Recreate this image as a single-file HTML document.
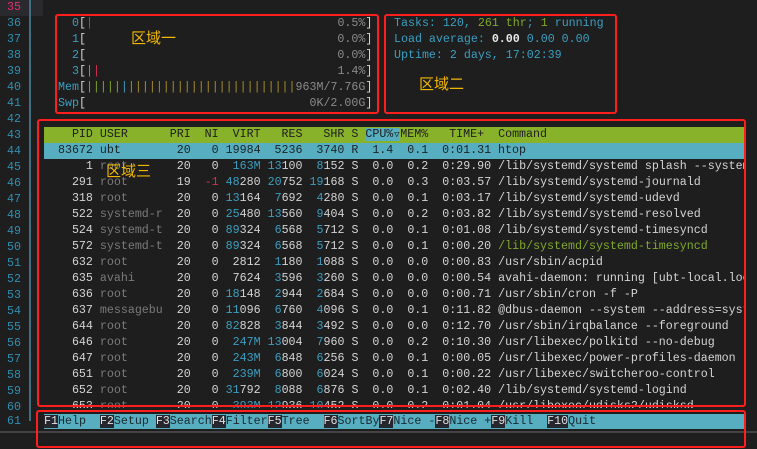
<!DOCTYPE html>
<html><head><meta charset="utf-8">
<style>
html,body{margin:0;padding:0;background:#1e1e1e;width:757px;height:449px;overflow:hidden;position:relative}
.l{position:absolute;left:44px;height:16px;line-height:16px;font-family:"Liberation Mono","DejaVu Sans Mono",monospace;font-size:11.65px;white-space:pre;color:#d4d4d4;overflow:hidden}
.n{position:absolute;left:0;width:21px;text-align:right;height:16px;line-height:16px;font-family:"Liberation Mono",monospace;font-size:11.65px;color:#2f8fb0}
.g{color:#7a7a7a}.t{color:#3a9ec0}.r{color:#d03050}.gr{color:#7fa82a}.d{color:#8a8a8a}.w{color:#e8e8e8}
.box{position:absolute;border:2.5px solid #ff1e1e;border-radius:3px;box-sizing:border-box}
.cn{position:absolute;font-family:"Noto Sans CJK SC","WenQuanYi Zen Hei",sans-serif;font-size:15px;line-height:16px;color:#f2b800}
.k{background:#26262e;color:#e0e0e0}.f{background:#56aec0;color:#1a2a30}
.tri{display:inline-block;width:7px;overflow:hidden;vertical-align:top;font-size:9px;text-align:center}
</style></head><body>
<div style="position:absolute;left:0;top:0;width:43px;height:16px;background:#2a2a2e"></div>
<div style="position:absolute;left:29px;top:0;width:1.5px;height:421px;background:#3f6f80"></div>
<div style="position:absolute;left:0;top:431px;width:757px;height:1.5px;background:#444"></div>

<div class="n" style="top:0;color:#e0306a">35</div>
<div class="n" style="top:16px">36</div><div class="n" style="top:32px">37</div><div class="n" style="top:48px">38</div><div class="n" style="top:64px">39</div><div class="n" style="top:80px">40</div><div class="n" style="top:96px">41</div><div class="n" style="top:112px">42</div><div class="n" style="top:128px">43</div><div class="n" style="top:144px">44</div><div class="n" style="top:160px">45</div><div class="n" style="top:176px">46</div><div class="n" style="top:192px">47</div><div class="n" style="top:208px">48</div><div class="n" style="top:224px">49</div><div class="n" style="top:240px">50</div><div class="n" style="top:256px">51</div><div class="n" style="top:272px">52</div><div class="n" style="top:288px">53</div><div class="n" style="top:304px">54</div><div class="n" style="top:320px">55</div><div class="n" style="top:336px">56</div><div class="n" style="top:352px">57</div><div class="n" style="top:368px">58</div><div class="n" style="top:384px">59</div><div class="n" style="top:400px">60</div><div class="n" style="top:414px">61</div>

<div class="l" style="top:16px"><span class="t">    0</span>[<span class="r">|</span>                                   <span class="d">0.5%</span>]</div>
<div class="l" style="top:32px"><span class="t">    1</span>[                                    <span class="d">0.0%</span>]</div>
<div class="l" style="top:48px"><span class="t">    2</span>[                                    <span class="d">0.0%</span>]</div>
<div class="l" style="top:64px"><span class="t">    3</span>[<span class="gr">|</span><span class="r">|</span>                                  <span class="d">1.4%</span>]</div>
<div class="l" style="top:80px"><span class="t">  Mem</span>[<span class="gr">|||||</span><span class="t">|</span><span style="color:#a8902a">||||||||||||||||||||||||</span><span class="d">963M/7.76G</span>]</div>
<div class="l" style="top:96px"><span class="t">  Swp</span>[                                <span class="d">0K/2.00G</span>]</div>

<div class="l" style="top:16px;left:394px"><span class="t">Tasks: 120, </span><span class="gr">261 thr</span><span class="t">; </span><span class="gr">1</span><span class="t"> running</span></div>
<div class="l" style="top:32px;left:394px"><span class="t">Load average: </span><b class="w">0.00</b><span class="t"> 0.00 0.00</span></div>
<div class="l" style="top:48px;left:394px"><span class="t">Uptime: 2 days, 17:02:39</span></div>

<div class="l" style="top:127px;width:701px;background:#88b22a;color:#1e1e1e">    PID USER      PRI  NI  VIRT   RES   SHR S <span style="background:#56aec0">CPU%<span class="tri">▽</span></span>MEM%   TIME+  Command</div>
<div class="l" style="top:143px;width:701px;background:#56aec0;color:#1a2328">  83672 ubt        20   0 19984  5236  3740 R  1.4  0.1  0:01.31 htop</div>
<div class="l" style="top:159px;width:701px">      1 <span class="g">root     </span>  20   0  <span class="t">163M</span> <span class="t">13</span>100  <span class="t">8</span>152 S  0.0  0.2  0:29.90 /lib/systemd/systemd splash --system</div>
<div class="l" style="top:175px;width:701px">    291 <span class="g">root     </span>  19  <span class="r">-1</span> <span class="t">48</span>280 <span class="t">20</span>752 <span class="t">19</span>168 S  0.0  0.3  0:03.57 /lib/systemd/systemd-journald</div>
<div class="l" style="top:191px;width:701px">    318 <span class="g">root     </span>  20   0 <span class="t">13</span>164  <span class="t">7</span>692  <span class="t">4</span>280 S  0.0  0.1  0:03.17 /lib/systemd/systemd-udevd</div>
<div class="l" style="top:207px;width:701px">    522 <span class="g">systemd-r</span>  20   0 <span class="t">25</span>480 <span class="t">13</span>560  <span class="t">9</span>404 S  0.0  0.2  0:03.82 /lib/systemd/systemd-resolved</div>
<div class="l" style="top:223px;width:701px">    524 <span class="g">systemd-t</span>  20   0 <span class="t">89</span>324  <span class="t">6</span>568  <span class="t">5</span>712 S  0.0  0.1  0:01.08 /lib/systemd/systemd-timesyncd</div>
<div class="l" style="top:239px;width:701px">    572 <span class="g">systemd-t</span>  20   0 <span class="t">89</span>324  <span class="t">6</span>568  <span class="t">5</span>712 S  0.0  0.1  0:00.20 <span class="gr">/lib/systemd/systemd-timesyncd</span></div>
<div class="l" style="top:255px;width:701px">    632 <span class="g">root     </span>  20   0  2812  <span class="t">1</span>180  <span class="t">1</span>088 S  0.0  0.0  0:00.83 /usr/sbin/acpid</div>
<div class="l" style="top:271px;width:701px">    635 <span class="g">avahi    </span>  20   0  7624  <span class="t">3</span>596  <span class="t">3</span>260 S  0.0  0.0  0:00.54 avahi-daemon: running [ubt-local.loc</div>
<div class="l" style="top:287px;width:701px">    636 <span class="g">root     </span>  20   0 <span class="t">18</span>148  <span class="t">2</span>944  <span class="t">2</span>684 S  0.0  0.0  0:00.71 /usr/sbin/cron -f -P</div>
<div class="l" style="top:303px;width:701px">    637 <span class="g">messagebu</span>  20   0 <span class="t">11</span>096  <span class="t">6</span>760  <span class="t">4</span>096 S  0.0  0.1  0:11.82 @dbus-daemon --system --address=syst</div>
<div class="l" style="top:319px;width:701px">    644 <span class="g">root     </span>  20   0 <span class="t">82</span>828  <span class="t">3</span>844  <span class="t">3</span>492 S  0.0  0.0  0:12.70 /usr/sbin/irqbalance --foreground</div>
<div class="l" style="top:335px;width:701px">    646 <span class="g">root     </span>  20   0  <span class="t">247M</span> <span class="t">13</span>004  <span class="t">7</span>960 S  0.0  0.2  0:10.30 /usr/libexec/polkitd --no-debug</div>
<div class="l" style="top:351px;width:701px">    647 <span class="g">root     </span>  20   0  <span class="t">243M</span>  <span class="t">6</span>848  <span class="t">6</span>256 S  0.0  0.1  0:00.05 /usr/libexec/power-profiles-daemon</div>
<div class="l" style="top:367px;width:701px">    651 <span class="g">root     </span>  20   0  <span class="t">239M</span>  <span class="t">6</span>800  <span class="t">6</span>024 S  0.0  0.1  0:00.22 /usr/libexec/switcheroo-control</div>
<div class="l" style="top:383px;width:701px">    652 <span class="g">root     </span>  20   0 <span class="t">31</span>792  <span class="t">8</span>088  <span class="t">6</span>876 S  0.0  0.1  0:02.40 /lib/systemd/systemd-logind</div>
<div class="l" style="top:399px;width:701px;height:9px">    653 <span class="g">root     </span>  20   0  <span class="t">393M</span> <span class="t">12</span>936 <span class="t">10</span>452 S  0.0  0.2  0:01.04 /usr/libexec/udisks2/udisksd</div>

<div class="l" style="top:414px;width:701px;height:15px;line-height:15px;background:#56aec0"><span class="k">F1</span><span class="f">Help  </span><span class="k">F2</span><span class="f">Setup </span><span class="k">F3</span><span class="f">Search</span><span class="k">F4</span><span class="f">Filter</span><span class="k">F5</span><span class="f">Tree  </span><span class="k">F6</span><span class="f">SortBy</span><span class="k">F7</span><span class="f">Nice -</span><span class="k">F8</span><span class="f">Nice +</span><span class="k">F9</span><span class="f">Kill  </span><span class="k">F10</span><span class="f">Quit</span></div>

<div class="box" style="left:55px;top:14px;width:324px;height:100px"></div>
<div class="box" style="left:384px;top:14px;width:233px;height:100px"></div>
<div class="box" style="left:37px;top:119px;width:709px;height:288px"></div>
<div class="box" style="left:36px;top:410px;width:710px;height:38px"></div>

<div class="cn" style="left:131px;top:30px">区域一</div>
<div class="cn" style="left:419px;top:76px">区域二</div>
<div class="cn" style="left:106px;top:163px">区域三</div>
</body></html>
